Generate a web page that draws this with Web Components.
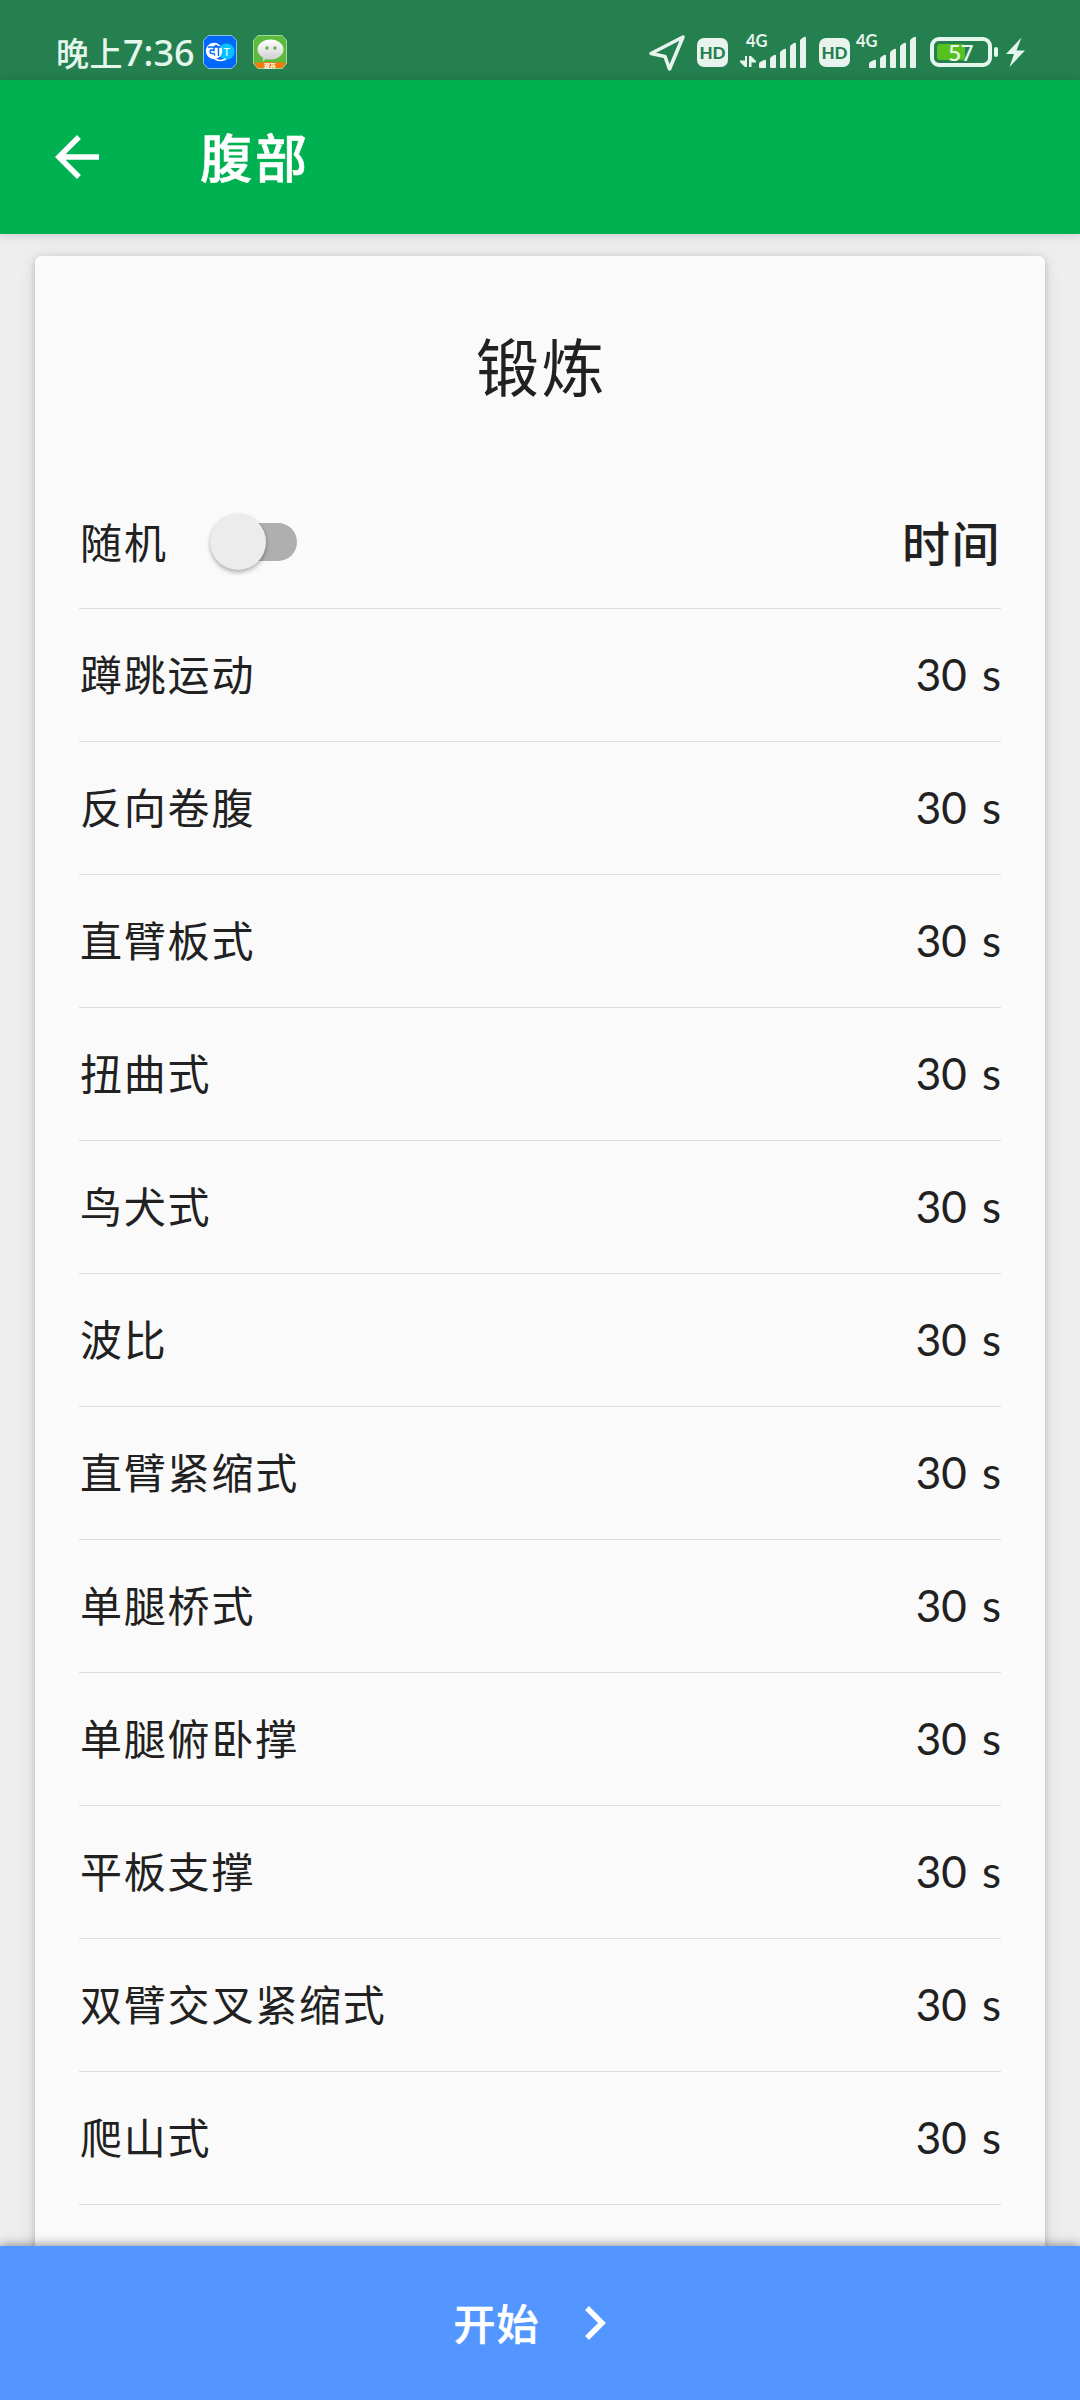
<!DOCTYPE html>
<html lang="zh-CN">
<head>
<meta charset="utf-8">
<title>腹部</title>
<style>
  html, body {
    margin: 0;
    height: 100%;
  }
  body {
    font-family: "Lato", "Noto Sans CJK SC", sans-serif;
    color: #212121;
    background: #eee;
    overflow: hidden;
  }
</style>
</head>
<body>
<workout-app>
  <status-bar slot="top"></status-bar>
  <app-bar slot="top">腹部</app-bar>
  <workout-card heading="锻炼">
    <toggle-switch slot="option">随机</toggle-switch>
    <span slot="column">时间</span>
    <exercise-row time="30 s">蹲跳运动</exercise-row>
    <exercise-row time="30 s">反向卷腹</exercise-row>
    <exercise-row time="30 s">直臂板式</exercise-row>
    <exercise-row time="30 s">扭曲式</exercise-row>
    <exercise-row time="30 s">鸟犬式</exercise-row>
    <exercise-row time="30 s">波比</exercise-row>
    <exercise-row time="30 s">直臂紧缩式</exercise-row>
    <exercise-row time="30 s">单腿桥式</exercise-row>
    <exercise-row time="30 s">单腿俯卧撑</exercise-row>
    <exercise-row time="30 s">平板支撑</exercise-row>
    <exercise-row time="30 s">双臂交叉紧缩式</exercise-row>
    <exercise-row time="30 s">爬山式</exercise-row>
  </workout-card>
  <start-button slot="bottom">开始</start-button>
</workout-app>

<script>
// attach an open shadow root filled with the given markup
function shadow(el, html) {
  const root = el.attachShadow({ mode: 'open' })
  root.innerHTML = html
  return root
}

customElements.define('workout-app', class extends HTMLElement {
  constructor() {
    super()
    shadow(this, `
    <style>
      :host{
        display:flex;
        flex-direction:column;
        width:1080px;
        height:2400px;
      }
      main{
        flex:1;
        min-height:0;
        overflow:hidden;
        padding:22px 35px 0;
      }
    </style>
    <slot name='top'></slot>
    <main><slot></slot></main>
    <slot name='bottom'></slot>`)
  }
})

customElements.define('hd-badge', class extends HTMLElement {
  constructor() {
    super()
    shadow(this, `
    <style>
      :host{
        display:flex;
        align-items:center;
        justify-content:center;
        width:31px;
        height:29px;
        border-radius:7px;
        background:#e9f3ee;
        color:#24804e;
        font:900 17px/29px "Lato", sans-serif;
      }
    </style>
    <span>HD</span>`)
  }
})

customElements.define('signal-bars', class extends HTMLElement {
  constructor() {
    super()
    const arrows = this.hasAttribute('data-arrows')
      ? `<path d='M5 22h2v11h-2L0 28v-1.500h5zM9 33V22h2l5 5v1.500h-4.500V33z'/>`
      : ''
    shadow(this, `
    <style>
      :host{ display:block; height:38px; }
      svg{ display:block; margin-top:-4px; }
      text{ font:700 16.500px "Lato", sans-serif; }
    </style>
    <svg width='68' height='42' viewBox='0 -4 68 42' fill='#e9f3ee'>
      <text x='6' y='13'>4G</text>
      ${arrows}
      <path d='M19 33v-3q0-1 1-2l4-2q2-1 2 1v6q0 1-1 1h-5q-1 0-1-1z'/>
      <path d='M30 33v-8q0-1 1-2l3-2q2-1 2 1v11q0 1-1 1h-4q-1 0-1-1z'/>
      <path d='M40 33v-14q0-1 1-2l3-2q2-1 2 1v17q0 1-1 1h-4q-1 0-1-1z'/>
      <path d='M50 33v-20q0-1 1-2l3-2q2-1 2 1v23q0 1-1 1h-4q-1 0-1-1z'/>
      <path d='M60 33V7q0-1 1-2l3-2q2-1 2 1v29q0 1-1 1h-4q-1 0-1-1z'/>
    </svg>`)
  }
})

customElements.define('status-bar', class extends HTMLElement {
  constructor() {
    super()
    shadow(this, `
    <style>
      :host{
        display:flex;
        box-sizing:border-box;
        height:80px;
        padding:34px 54px 0 56px;
        background:#24804e;
        color:#e5f6ec;
      }
      .time{
        width:147px;
        font:500 33px/36px "Noto Sans CJK SC", sans-serif;
        letter-spacing:0.500px;
        white-space:nowrap;
      }
      .time i{
        font:500 36px/36px "Noto Sans", sans-serif;
        letter-spacing:0;
      }
      .app{ margin:1px 16px 0 0; }
      .space{ flex:1; }
      svg{ display:block; flex:none; }
      hd-badge{ margin-top:4px; }
    </style>
    <span class='time'>晚上<i>7:36</i></span>
    <svg class='app' width='34' height='34' viewBox='0 0 34 34'>
      <path d='M5 .5h24l4.500 5v23l-4.500 5H5l-4.500-5v-23z' fill='#0068fb' stroke='#8fc0e8'/>
      <circle cx='23.500' cy='16.500' r='8' fill='#08c3ff'/>
      <circle cx='11' cy='16' r='8.200' fill='#fff'/>
      <path d='M12 24q5 3 11 0' stroke='#fff' stroke-width='1.500' fill='none'/>
      <path d='M5 12h13M15.500 12v9M11 12v3.500q-4-1.500-4 1t4 2l1 2M12 12q0-3 3.500 0' stroke='#0068fb' stroke-width='1.400' fill='none'/>
      <text x='20.500' y='20.500' font-size='10.500' fill='#fff' font-family='Lato'>T</text>
    </svg>
    <svg class='app' width='34' height='34' viewBox='0 0 34 34'>
      <defs>
        <linearGradient id='face' x2='0' y2='1'>
          <stop offset='0' stop-color='#fff'/><stop offset='1' stop-color='#ccc'/>
        </linearGradient>
        <clipPath id='tile'><path d='M5 0h24l5 6v22l-5 6H5l-5-6V6z'/></clipPath>
      </defs>
      <g clip-path='url(#tile)'>
        <path d='M0 0h34v34H0z' fill='#5abb3c'/>
        <path d='M0 28q17-2 34 0v6H0z' fill='#f4780b'/>
      </g>
      <path d='M5 .5h24l4.500 5v23l-4.500 5H5l-4.500-5v-23z' fill='none' stroke='#a5d79b'/>
      <path d='M17.500 4.500c7.500 0 13 4.500 13 10s-5.500 10-13 10c-1.500 0-3 0-4-.5l-4 2.500.5-4c-3.500-2-5.500-4.500-5.500-8 0-5.500 5.500-10 13-10z' fill='url(#face)'/>
      <circle cx='14' cy='13' r='1.700' fill='#6ba853'/><circle cx='22' cy='13' r='1.700' fill='#6ba853'/>
      <text x='11' y='33' font-size='6' font-weight='900' fill='#fff' font-family='Noto Sans CJK SC'>双开</text>
    </svg>
    <span class='space'></span>
    <svg width='38' height='38' viewBox='0 0 38 38' style='margin-right:11px'>
      <path d='M35 3L3 19.500l14 3L21.500 35z' fill='none' stroke='#e9f3ee' stroke-width='3.600' stroke-linejoin='round'/>
    </svg>
    <hd-badge></hd-badge>
    <signal-bars data-arrows style='margin-left:12px'></signal-bars>
    <hd-badge style='margin-left:11px'></hd-badge>
    <signal-bars style='margin-left:0'></signal-bars>
    <svg width='98' height='38' viewBox='0 0 98 38' style='margin-left:10px'>
      <rect x='4' y='5' width='58' height='26' rx='7' fill='none' stroke='#e5f6ec' stroke-width='4'/>
      <rect x='9' y='10' width='28' height='16' rx='3' fill='#56c01f'/>
      <rect x='66' y='13' width='4' height='10' rx='2' fill='#e5f6ec'/>
      <text x='20.500' y='26.500' font-size='22' font-weight='500' fill='#e5f6ec' font-family='Noto Sans'>57</text>
      <path d='M93.500 3.500L78 20h8l-4.500 13L97 16.500h-8.500z' fill='#e5f6ec'/>
    </svg>`)
  }
})

customElements.define('app-bar', class extends HTMLElement {
  constructor() {
    super()
    shadow(this, `
    <style>
      :host{
        display:flex;
        align-items:center;
        box-sizing:border-box;
        height:154px;
        padding:0 44px;
        background:#00b152;
        color:#fff;
        box-shadow:0 1px 10px rgba(0,0,0,.16);
        font-size:52px;
        font-weight:500;
        letter-spacing:3px;
        -webkit-text-stroke:0.600px #fff;
      }
      span{ padding-bottom:3px; }
      svg{ width:66px; height:66px; margin-right:90px; }
    </style>
    <svg viewBox='0 0 24 24'><path fill='#fff' d='M20 11H7.830l5.590-5.590L12 4l-8 8 8 8 1.410-1.410L7.830 13H20v-2z'/></svg>
    <span><slot></slot></span>`)
  }
})

customElements.define('toggle-switch', class extends HTMLElement {
  constructor() {
    super()
    shadow(this, `
    <style>
      :host{
        display:flex;
        align-items:center;
        font-size:42px;
        letter-spacing:1.900px;
      }
      .label{ padding:0 0 4px 1px; }
      .track{
        display:flex;
        align-items:center;
        width:82px;
        height:38px;
        margin-left:47px;
        border-radius:19px;
        background:#afafaf;
      }
      .thumb{
        flex:none;
        width:56px;
        height:56px;
        margin-left:-5px;
        border-radius:50%;
        background:#ececec;
        box-shadow:0 3px 4px rgba(0,0,0,.25), 0 0 3px rgba(0,0,0,.1);
      }
    </style>
    <span class='label'><slot></slot></span>
    <span class='track'><span class='thumb'></span></span>`)
  }
})

customElements.define('exercise-row', class extends HTMLElement {
  constructor() {
    super()
    shadow(this, `
    <style>
      :host{
        display:flex;
        align-items:center;
        justify-content:space-between;
        box-sizing:border-box;
        height:133px;
        border-bottom:1px solid #dcdcdc;
        font-size:42px;
        letter-spacing:1.800px;
      }
      .name{ padding:0 0 5px 1px; }
      .time{
        padding-bottom:2px;
        font-size:44px;
        letter-spacing:0;
        word-spacing:4px;
      }
    </style>
    <span class='name'><slot></slot></span>
    <span class='time'></span>`)
  }
  connectedCallback() {
    this.shadowRoot.querySelector('.time').textContent = this.getAttribute('time')
  }
})

customElements.define('workout-card', class extends HTMLElement {
  constructor() {
    super()
    shadow(this, `
    <style>
      :host{
        display:block;
        box-sizing:border-box;
        height:2100px;
        padding:0 44px;
        border-radius:6px;
        background:#fafafa;
        box-shadow:0 2px 6px rgba(0,0,0,.18), 0 2px 18px rgba(0,0,0,.1);
      }
      h1{
        margin:0;
        height:220px;
        padding-left:3px;
        font-size:63px;
        font-weight:400;
        line-height:221px;
        letter-spacing:2.500px;
        text-align:center;
      }
      header{
        display:flex;
        align-items:center;
        justify-content:space-between;
        box-sizing:border-box;
        height:133px;
        border-bottom:1px solid #dcdcdc;
      }
      .column{
        padding-bottom:3px;
        font-size:48px;
        font-weight:500;
        letter-spacing:1.500px;
      }
    </style>
    <h1></h1>
    <header>
      <slot name='option'></slot>
      <span class='column'><slot name='column'></slot></span>
    </header>
    <slot></slot>`)
  }
  connectedCallback() {
    this.shadowRoot.querySelector('h1').textContent = this.getAttribute('heading')
  }
})

customElements.define('start-button', class extends HTMLElement {
  constructor() {
    super()
    shadow(this, `
    <style>
      :host{
        display:flex;
        align-items:center;
        justify-content:center;
        box-sizing:border-box;
        height:154px;
        padding-right:4px;
        background:#5496ff;
        color:#fff;
        box-shadow:0 0 11px rgba(0,0,0,.5);
        font-size:42px;
        font-weight:500;
        letter-spacing:1px;
        -webkit-text-stroke:0.500px #fff;
        z-index:1;
      }
      span{ padding-bottom:4px; }
      svg{ width:56px; height:56px; margin-left:27px; }
    </style>
    <span><slot></slot></span>
    <svg viewBox='0 0 56 56'><path d='M20 13l15 15-15 15' fill='none' stroke='#fff' stroke-width='5.500'/></svg>`)
  }
})
</script>
</body>
</html>
